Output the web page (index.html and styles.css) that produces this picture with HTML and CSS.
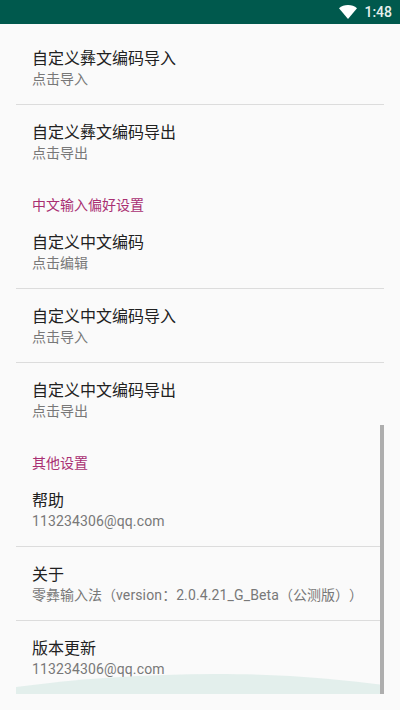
FILE: index.html
```html
<!DOCTYPE html>
<html lang="zh">
<head>
<meta charset="utf-8">
<title>设置</title>
<link rel="stylesheet" href="styles.css">
</head>
<body>
<header class="status">
  <svg class="wifi" width="18" height="14" viewBox="0 0 18 14"><path d="M0 3.2C2.400 1.200 5.500 0 9 0s6.600 1.200 9 3.200L9 14z" fill="#fff"/></svg>
  <span class="time">1:48</span>
</header>
<main class="screen">
  <div class="list">
    <section class="group first">
      <div class="item line"><div class="title">自定义彝文编码导入</div><div class="sub">点击导入</div></div>
      <div class="item"><div class="title">自定义彝文编码导出</div><div class="sub">点击导出</div></div>
    </section>
    <section class="group">
      <h2 class="cat">中文输入偏好设置</h2>
      <div class="item line"><div class="title">自定义中文编码</div><div class="sub">点击编辑</div></div>
      <div class="item line"><div class="title">自定义中文编码导入</div><div class="sub">点击导入</div></div>
      <div class="item"><div class="title">自定义中文编码导出</div><div class="sub">点击导出</div></div>
    </section>
    <section class="group">
      <h2 class="cat">其他设置</h2>
      <div class="item line"><div class="title">帮助</div><div class="sub lat">113234306@qq.com</div></div>
      <div class="item line"><div class="title">关于</div><div class="sub">零彝输入法（<span class="lat">version</span>：<span class="lat">2.0.4.21_G_Beta</span>（公测版））</div></div>
      <div class="item"><div class="title">版本更新</div><div class="sub lat">113234306@qq.com</div></div>
    </section>
    <svg class="wave" width="368" height="20" viewBox="0 0 368 20" preserveAspectRatio="none"><path d="M0 13C60 5 130 0 200 0s120 5 168 11V20H0z" fill="#e3efec"/></svg>
    <div class="scrollbar"></div>
  </div>
</main>
</body>
</html>
```
FILE: styles.css
```css
html, body { margin: 0; padding: 0; }
body {
  width: 400px;
  height: 710px;
  overflow: hidden;
  background: #fafafa;
  font-family: Roboto, "Noto Sans CJK SC", sans-serif;
  text-spacing-trim: space-all;
}
.status {
  height: 24px;
  background: #00594d;
  display: flex;
  align-items: center;
  justify-content: flex-end;
  gap: 7px;
  padding-right: 8px;
  box-sizing: border-box;
  color: #e6f0ee;
}
.time { font-size: 14px; font-weight: 500; line-height: 24px; }
.screen { padding: 0 16px; }
.list {
  position: relative;
  height: 670px;
  overflow: hidden;
}
.group.first { padding-top: 7px; }
.cat {
  margin: 0;
  height: 36px;
  padding: 16px 0 0 16px;
  box-sizing: border-box;
  font-size: 14px;
  line-height: 20px;
  font-weight: 400;
  color: #a92f72;
}
.item {
  height: 74px;
  padding: 18px 16px 0;
  box-sizing: border-box;
}
.item.line { border-bottom: 1px solid #dcdcdc; }
.title { font-size: 16px; line-height: 20px; color: #212121; }
.sub { font-size: 14px; line-height: 20px; color: #787878; white-space: nowrap; }
.lat { letter-spacing: 0.13px; }
.wave { position: absolute; left: 0; bottom: 0; display: block; }
.scrollbar {
  position: absolute;
  right: 0;
  top: 401px;
  bottom: 0;
  width: 4px;
  background: #aeaeae;
}
```
